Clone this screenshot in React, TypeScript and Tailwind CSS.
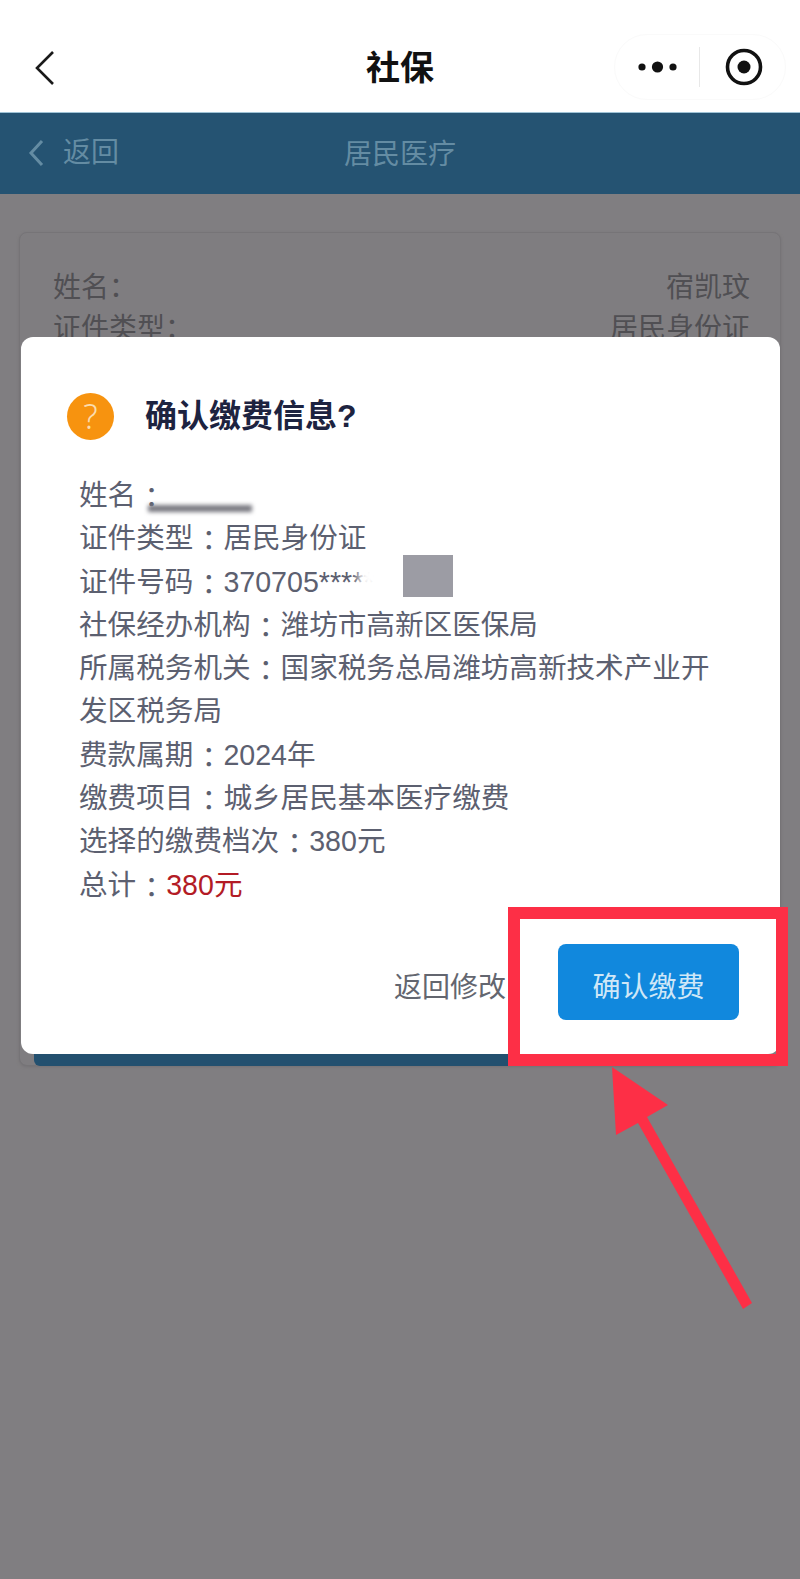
const fontStack = "font-['Liberation_Sans','Noto_Sans_CJK_SC',sans-serif]";

const Colon = () => (
  <span className="relative top-[3px] inline-block w-[30px] pl-[1px] text-left font-['Noto_Sans_CJK_TC',sans-serif] leading-[20px]">：</span>
);

const InfoLine = ({ label, children }: { label: string; children?: React.ReactNode }) => (
  <p>
    {label}
    <Colon />
    {children}
  </p>
);

const TopBar = () => (
  <div className="flex h-[112px] items-end bg-white">
    <div className="relative flex h-[90px] w-full items-center justify-center pt-[2px]">
      <svg className="absolute left-[34px] top-[28px] h-[36px] w-[22px]" viewBox="0 0 22 36" fill="none" stroke="#1a1a1a" strokeWidth="2.6">
        <path d="M19 2 3 18l16 16" />
      </svg>
      <span className="text-[34px] font-bold text-[#111]">社保</span>
      <div className="absolute right-[14px] top-[12px] flex h-[66px] w-[172px] items-center rounded-[33px] border border-[#fafafa]">
        <svg className="ml-[22px] h-[14px] w-[42px]" viewBox="0 0 42 14" fill="#111">
          <circle cx="5" cy="7" r="3.6" />
          <circle cx="20.5" cy="7" r="5.6" />
          <circle cx="36" cy="7" r="3.6" />
        </svg>
        <div className="ml-[20px] h-[40px] w-px bg-[#e8e8e8]" />
        <svg className="ml-[25px] h-[38px] w-[38px]" viewBox="0 0 38 38" fill="none">
          <circle cx="19" cy="19" r="16.5" stroke="#111" strokeWidth="3.6" />
          <circle cx="19" cy="19" r="6.5" fill="#111" />
        </svg>
      </div>
    </div>
  </div>
);

const SubBar = () => (
  <div className="relative flex h-[82px] items-center justify-center border-t border-[#9fc3d6] bg-[#255372] pt-[2px] text-[28px] text-[#648ca3]">
    <div className="absolute left-[28px] top-[26px] flex items-center gap-[19px]">
      <svg className="h-[28px] w-[16px]" viewBox="0 0 16 28" fill="none" stroke="#648ca3" strokeWidth="3">
        <path d="M14 2 3 14l11 12" />
      </svg>
      <span className="leading-[28px]">返回</span>
    </div>
    <span>居民医疗</span>
  </div>
);

const BackgroundCard = () => (
  <div className="mx-[19px] mt-[38px] flex h-[834px] flex-col rounded-[8px] border border-[#767477] bg-[#7f7d80] pl-[33px] pr-[30px] pt-[34px] text-[28px] leading-[41px] text-[#504f53] shadow-[0_1px_3px_#747275]">
    <div className="flex justify-between">
      <span>姓名：</span>
      <span>宿凯玟</span>
    </div>
    <div className="flex justify-between">
      <span>证件类型：</span>
      <span>居民身份证</span>
    </div>
    <div className="mb-[-1px] ml-[-19px] mr-[-16px] mt-auto h-[14px] rounded-b-[6px] bg-[#23506f]" />
  </div>
);

const ConfirmDialog = () => (
  <div className="absolute left-[21px] top-[337px] h-[717px] w-[759px] rounded-[12px] bg-white">
    <div className="ml-[46px] mt-[54px] flex items-center gap-[31px]">
      <div className="flex h-[47px] w-[47px] items-center justify-center rounded-full bg-[#f7930f] font-['Noto_Sans',sans-serif] text-[34px] font-light leading-none text-[#fbdcae]">?</div>
      <h2 className="text-[32px] font-bold leading-[50px] text-[#1d2340]">确认缴费信息?</h2>
    </div>
    <div className="relative ml-[58px] mr-[56px] mt-[33px] text-[28.6px] leading-[43.3px] text-[#5c6070]">
      <InfoLine label="姓名" />
      <InfoLine label="证件类型">居民身份证</InfoLine>
      <InfoLine label="证件号码">370705*****</InfoLine>
      <InfoLine label="社保经办机构">潍坊市高新区医保局</InfoLine>
      <InfoLine label="所属税务机关">国家税务总局潍坊高新技术产业开发区税务局</InfoLine>
      <InfoLine label="费款属期">2024年</InfoLine>
      <InfoLine label="缴费项目">城乡居民基本医疗缴费</InfoLine>
      <InfoLine label="选择的缴费档次">380元</InfoLine>
      <InfoLine label="总计">
        <span className="text-[#b31b25]">380元</span>
      </InfoLine>
      <div className="absolute left-[69px] top-[31px] h-[7px] w-[104px] bg-[#77777f] blur-[2px]" />
      <div className="absolute left-[280px] top-[90px] h-[24px] w-[24px] bg-white blur-[4px]" />
      <div className="absolute left-[324px] top-[81px] h-[42px] w-[50px] bg-[#9c9ca4] blur-[0.5px]" />
    </div>
    <div className="absolute right-[41px] top-[607px] flex items-center gap-[52px]">
      <span className="pt-[12px] text-[28px] text-[#63666f]">返回修改</span>
      <button className="flex h-[76px] w-[181px] items-center justify-center rounded-[8px] bg-[#1188dd] pt-[12px] text-[28px] text-[#cfe7f7]">确认缴费</button>
    </div>
  </div>
);

const Annotation = () => (
  <>
    <div className="absolute left-[508px] top-[907px] h-[159px] w-[280px] border-[12px] border-[#fd2f46]" />
    <svg className="absolute left-[600px] top-[1060px] h-[260px] w-[160px]" viewBox="0 0 160 260" fill="#fd2f46">
      <path d="M12 7 68 45 47 57 152 243 143 249 38 63 16 75Z" />
    </svg>
  </>
);

export default function App() {
  return (
    <div className={`relative h-[1579px] w-[800px] overflow-hidden bg-[#807e81] ${fontStack}`}>
      <TopBar />
      <SubBar />
      <BackgroundCard />
      <ConfirmDialog />
      <Annotation />
    </div>
  );
}
